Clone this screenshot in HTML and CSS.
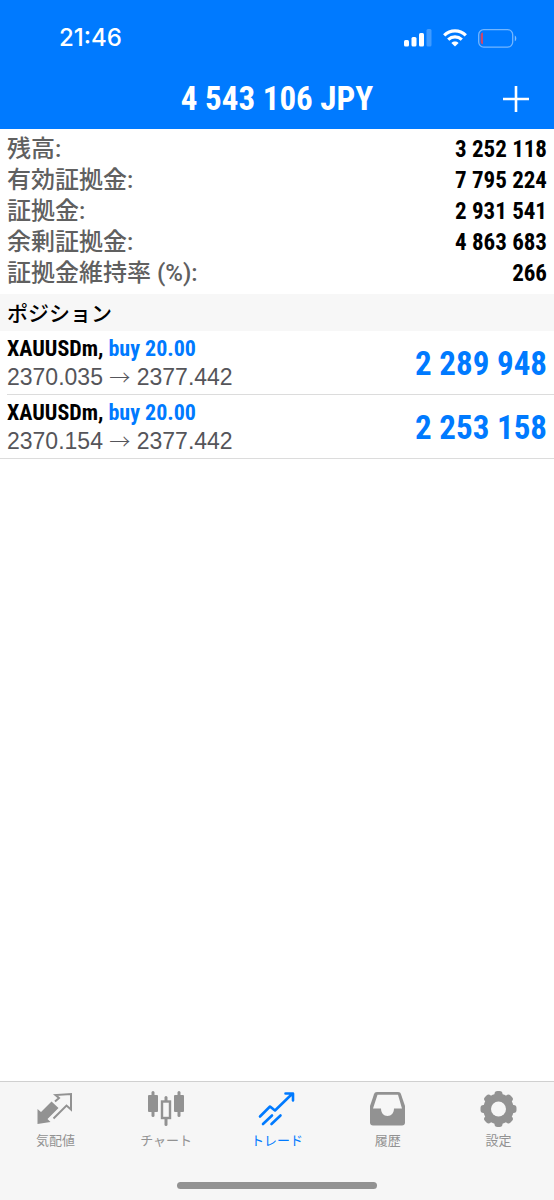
FILE: index.html
```html
<!DOCTYPE html>
<html lang="ja">
<head>
<meta charset="utf-8">
<meta name="viewport" content="width=device-width, initial-scale=1">
<title>トレード</title>
<link rel="stylesheet" href="styles.css">
</head>
<body>
<header class="top">
  <div class="status">
    <time class="clock">21:46</time>
    <div class="status-icons">
      <svg width="28" height="18" viewBox="0 0 28 18" fill="#fff" aria-hidden="true">
        <rect x="0" y="11" width="5" height="6.500" rx="1.500"/>
        <rect x="7.500" y="8" width="5" height="9.500" rx="1.500"/>
        <rect x="15" y="4" width="5" height="13.500" rx="1.500"/>
        <rect x="22.500" y="0" width="5" height="17.500" rx="1.500" opacity=".25"/>
      </svg>
      <svg width="24" height="18" viewBox="0 0 24 18" fill="none" stroke="#fff" stroke-width="3.200" aria-hidden="true">
        <path d="M1.200 6.400C7.300.400 16.700.400 22.800 6.400"/>
        <path d="M5.200 10.600c3.900-3.600 9.700-3.600 13.600 0"/>
        <path d="M12 17.500 8.400 14c2.100-1.900 5.100-1.900 7.200 0z" fill="#fff" stroke="none"/>
      </svg>
      <svg width="39" height="19" viewBox="0 0 39 19" fill="none" aria-hidden="true">
        <rect x=".7" y=".7" width="34" height="17.400" rx="5" stroke="#fff" stroke-opacity=".45" stroke-width="1.300"/>
        <path d="M5 3.500v11.800c-1.500-.2-2.300-1-2.300-2.300V5.800c0-1.300.8-2.100 2.300-2.300z" fill="#c8486e"/>
        <path d="M36.800 6.500c2 .8 2 5 0 5.800z" fill="#fff" fill-opacity=".5"/>
      </svg>
    </div>
  </div>
  <div class="nav">
    <h1 class="title">4 543 106 JPY</h1>
    <button class="add" type="button" aria-label="追加">
      <svg width="26" height="26" viewBox="0 0 26 26" stroke="#fff" stroke-width="2.600" aria-hidden="true"><path d="M13 0v26M0 13h26"/></svg>
    </button>
  </div>
</header>
<main class="content">
  <dl class="summary">
    <div class="line"><dt>残高:</dt><dd>3 252 118</dd></div>
    <div class="line"><dt>有効証拠金:</dt><dd>7 795 224</dd></div>
    <div class="line"><dt>証拠金:</dt><dd>2 931 541</dd></div>
    <div class="line"><dt>余剰証拠金:</dt><dd>4 863 683</dd></div>
    <div class="line"><dt>証拠金維持率 (%):</dt><dd>266</dd></div>
  </dl>
  <h2 class="section">ポジション</h2>
  <ul class="positions">
    <li class="position">
      <div class="row">
        <div class="info">
          <p class="symbol">XAUUSDm, <span class="side">buy 20.00</span></p>
          <p class="prices">2370.035 <span class="arrow">→</span> 2377.442</p>
        </div>
        <strong class="profit">2 289 948</strong>
      </div>
    </li>
    <li class="position">
      <div class="row">
        <div class="info">
          <p class="symbol">XAUUSDm, <span class="side">buy 20.00</span></p>
          <p class="prices">2370.154 <span class="arrow">→</span> 2377.442</p>
        </div>
        <strong class="profit">2 253 158</strong>
      </div>
    </li>
  </ul>
</main>
<footer class="bottom">
  <nav class="tabs">
    <a class="tab" href="#quotes">
      <svg width="38" height="38" viewBox="0 0 38 38" fill="none" aria-hidden="true">
        <path d="M1.500 17 5 20 15.500 9.500l7 6.500L11.500 27l3 3L1.500 32z" fill="#929292"/>
        <path d="M19 9.500l4-3.500-3.500-3L35 2v15.500l-4.500-4L17.500 26.500" stroke="#929292" stroke-width="2"/>
      </svg>
      <span>気配値</span>
    </a>
    <a class="tab" href="#chart">
      <svg width="38" height="38" viewBox="0 0 38 38" fill="#929292" aria-hidden="true">
        <rect x="1" y="3" width="10" height="17" rx="1"/><rect x="4.500" y="-1" width="3" height="26" rx="1.500"/>
        <rect x="27" y="3" width="10" height="17" rx="1"/><rect x="30.500" y="-1" width="3" height="26" rx="1.500"/>
        <rect x="17.500" y="4" width="3" height="30" rx="1.500"/>
        <rect x="15" y="9.500" width="8" height="16.500" fill="#f6f6f6" stroke="#929292" stroke-width="2.400"/>
      </svg>
      <span>チャート</span>
    </a>
    <a class="tab active" href="#trade" aria-current="page">
      <svg width="38" height="38" viewBox="0 0 38 38" fill="none" stroke="#007aff" stroke-width="2.600" stroke-linecap="round" stroke-linejoin="round" aria-hidden="true">
        <path d="M2 24.500 12 14.500l5 4L34 2M27.500 1.500H35V8.500M5 32l9-8.500M13.500 32l9-8.500"/>
      </svg>
      <span>トレード</span>
    </a>
    <a class="tab" href="#history">
      <svg width="38" height="38" viewBox="0 0 38 38" aria-hidden="true">
        <path d="M8 0h21c1.700 0 2.500.8 3 2.200L36 14v16.500c0 2-1.200 3-3 3H4c-1.800 0-3-1-3-3V14L5 2.200C5.500.8 6.300 0 8 0z" fill="#929292"/>
        <path d="M8.500 2.800h20.500l4 13.700H25c0 4.500-2.700 7.500-6.500 7.500S12 21 12 16.500H4z" fill="#f6f6f6"/>
      </svg>
      <span>履歴</span>
    </a>
    <a class="tab" href="#settings">
      <svg width="38" height="38" viewBox="0 0 38 38" aria-hidden="true">
        <g fill="#929292" transform="translate(18.500 17)"><circle r="15.300"/>
          <g id="teeth"><rect x="-4" y="-18" width="8" height="36" rx="3"/><rect x="-18" y="-4" width="36" height="8" rx="3"/></g>
          <use href="#teeth" transform="rotate(45)"/></g>
        <circle cx="18.500" cy="17" r="7.500" fill="#f6f6f6"/>
      </svg>
      <span>設定</span>
    </a>
  </nav>
  <div class="home"></div>
</footer>
</body>
</html>
```
FILE: styles.css
```css
* { box-sizing: border-box; }
body {
  margin: 0;
  min-height: 100vh;
  display: flex;
  flex-direction: column;
  background: #fff;
  color: #000;
  font-family: "Liberation Sans", "Noto Sans CJK JP", sans-serif;
}
h1, h2, p, dl, dd, ul { margin: 0; padding: 0; }
.top { background: #007aff; color: #fff; }
.status {
  height: 68px;
  padding: 8px 37px 0 59px;
  display: flex;
  align-items: center;
  justify-content: space-between;
}
.clock { font: 500 24px/28px Inter, sans-serif; }
.status-icons { display: flex; align-items: center; gap: 11px; }
.nav {
  height: 61px;
  padding: 0 25px;
  display: grid;
  grid-template-columns: 1fr auto 1fr;
  align-items: center;
}
.title, .line dd, .symbol, .profit {
  font-family: "Roboto Condensed", "Arial Narrow", "Liberation Sans", sans-serif;
  font-weight: 700;
}
.title { grid-column: 2; font-size: 33px; line-height: 40px; white-space: nowrap; }
.add {
  justify-self: end;
  display: flex;
  padding: 0;
  border: 0;
  background: none;
}
.content { flex: 1; }
.summary { padding: 5px 7px; }
.line {
  display: flex;
  justify-content: space-between;
  align-items: center;
  height: 31px;
}
.line dt {
  color: #606060;
  font: 500 24px/31px Roboto, "Noto Sans CJK JP", sans-serif;
}
.line dd { font-size: 23px; line-height: 31px; }
.section {
  padding: 0 7px;
  background: #f7f7f7;
  font: 500 21px/37px "Noto Sans CJK JP", sans-serif;
}
.positions { list-style: none; }
.position { padding-left: 7px; }
.row {
  min-height: 64px;
  padding: 3px 7px 0 0;
  display: flex;
  align-items: center;
  justify-content: space-between;
  border-bottom: 1px solid #dcdcdc;
}
.position:last-child { padding-left: 0; }
.position:last-child .row { padding-left: 7px; }
.info { padding-bottom: 2px; }
.symbol { font-size: 22px; line-height: 29px; }
.side { color: #007aff; }
.prices { color: #55555a; font-size: 23px; line-height: 29px; }
.arrow { font-family: "Noto Sans CJK JP", sans-serif; font-weight: 300; font-size: 21px; line-height: 1; }
.profit { color: #007aff; font-size: 33px; line-height: 40px; }
.bottom {
  background: #f6f6f6;
  border-top: 1px solid #d0d0d0;
  padding-bottom: 11px;
}
.tabs { display: grid; grid-template-columns: repeat(5, 1fr); padding-top: 10px; }
.tab {
  display: flex;
  flex-direction: column;
  align-items: center;
  color: #929292;
  text-decoration: none;
  font: 400 13px/20px "Noto Sans CJK JP", sans-serif;
}
.tab svg { overflow: visible; }
.active { color: #007aff; }
.home {
  width: 36%;
  height: 7px;
  margin: 32px auto 0;
  border-radius: 4px;
  background: #929292;
}
```
